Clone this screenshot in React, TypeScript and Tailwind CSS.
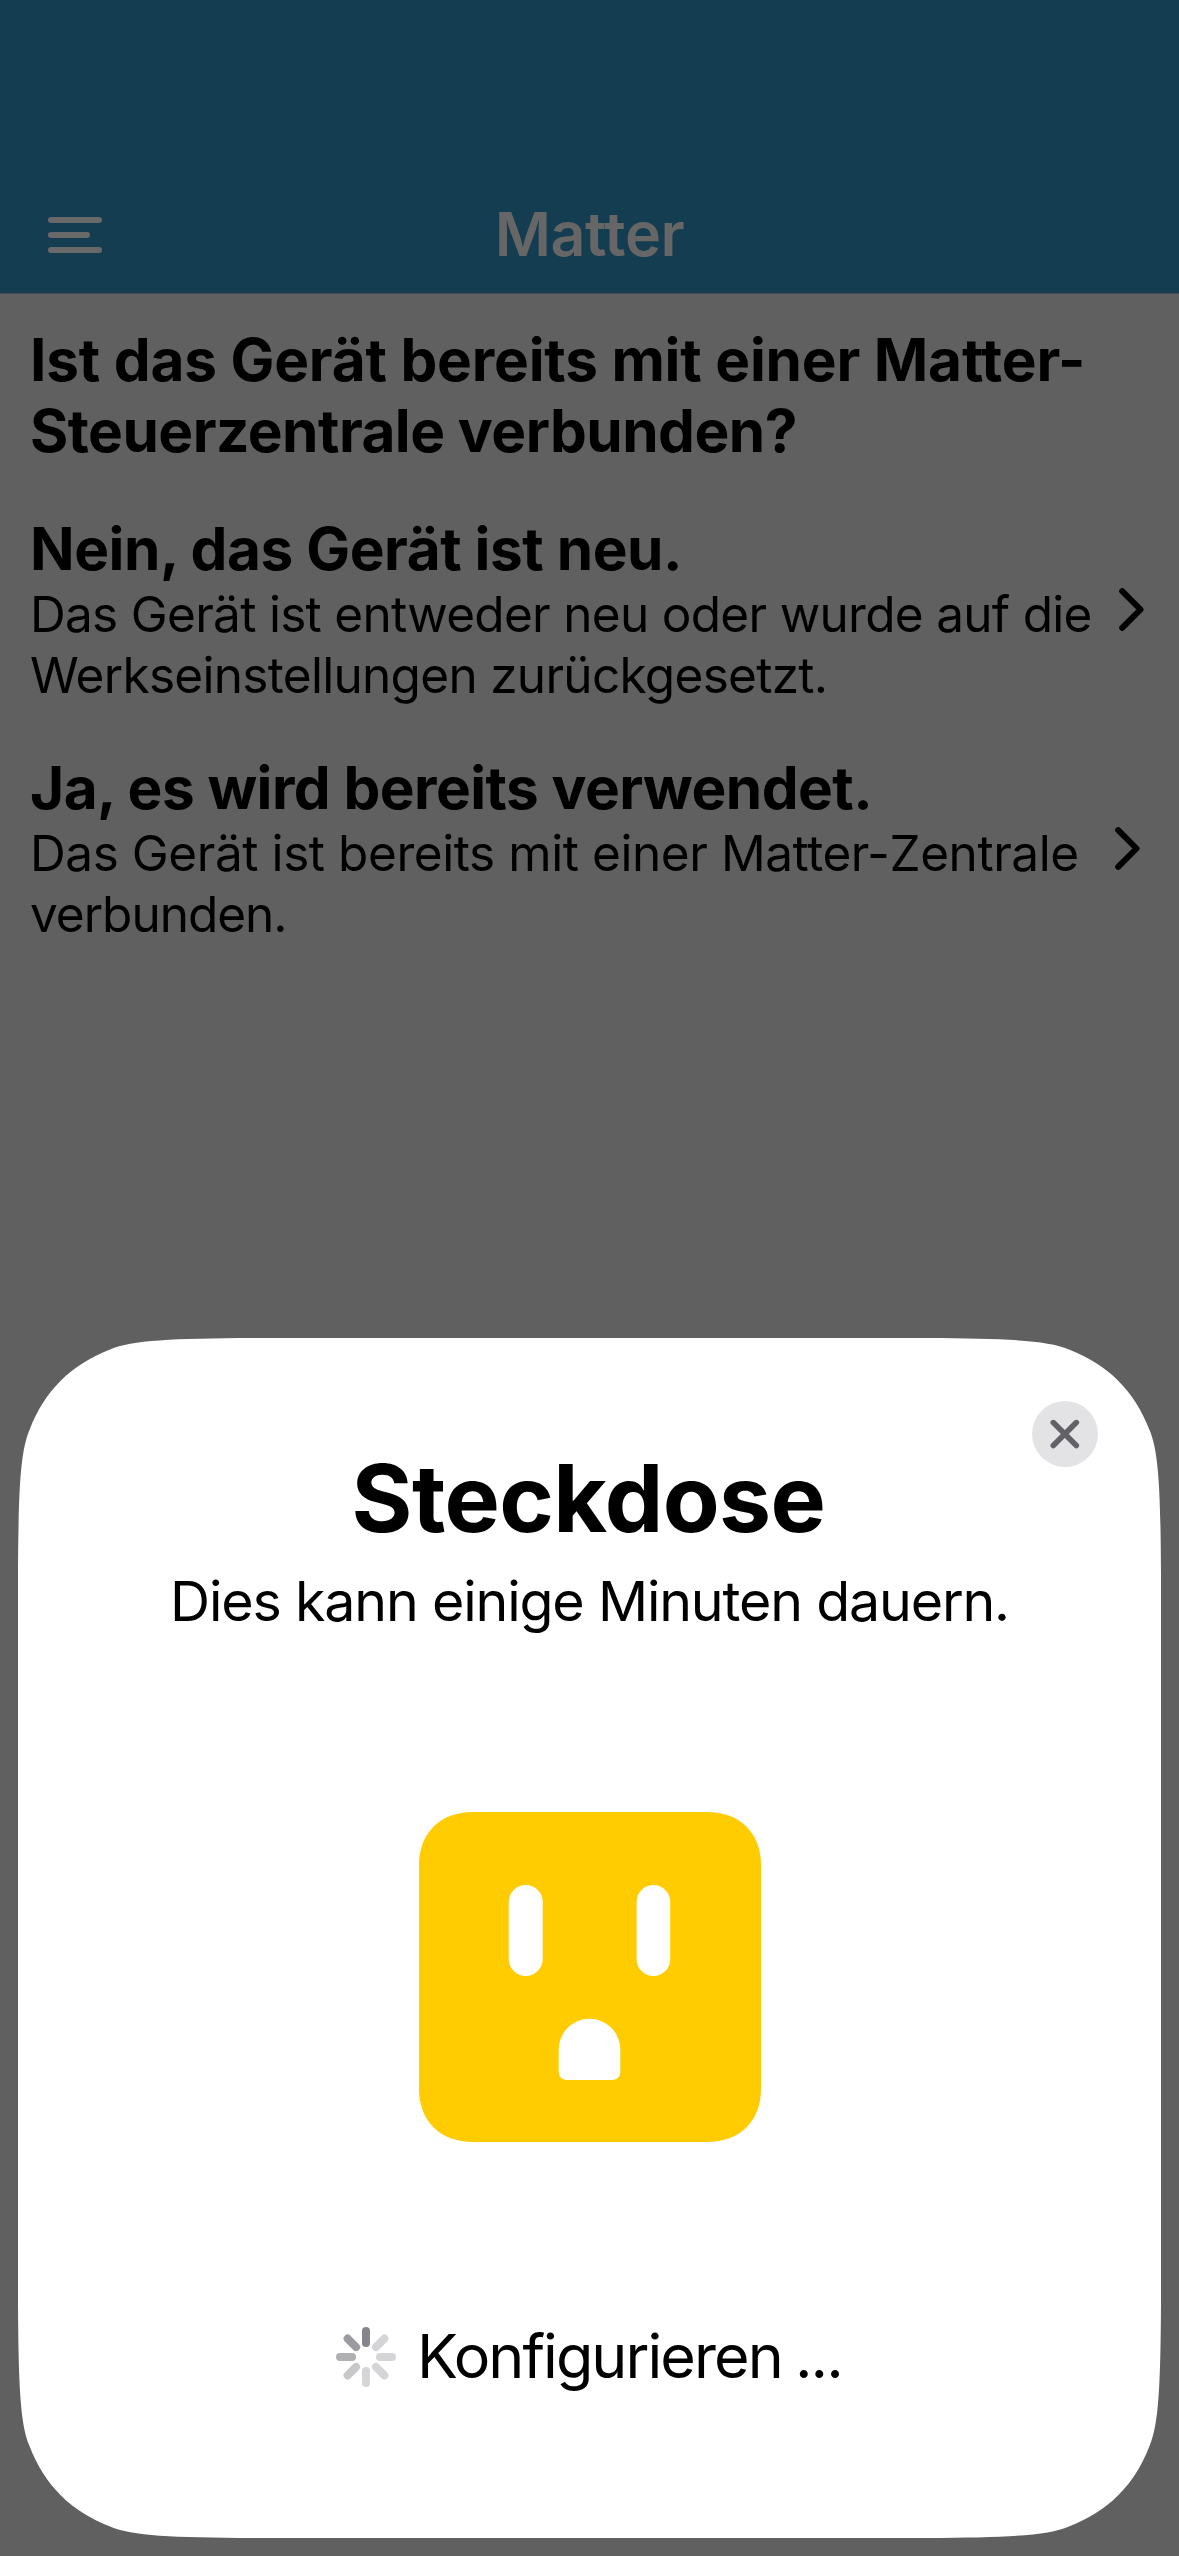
type Line = { text: string; tracking: string };
type Option = { title: Line; lines: Line[]; chevron: string };

const question: Line[] = [
  { text: 'Ist das Gerät bereits mit einer Matter-', tracking: 'tracking-[-0.18px]' },
  { text: 'Steuerzentrale verbunden?', tracking: 'tracking-[-0.52px]' },
];

const options: Option[] = [
  {
    title: { text: 'Nein, das Gerät ist neu.', tracking: 'tracking-[-0.45px]' },
    lines: [
      { text: 'Das Gerät ist entweder neu oder wurde auf die', tracking: 'tracking-[-0.7px]' },
      { text: 'Werkseinstellungen zurückgesetzt.', tracking: 'tracking-[-0.7px]' },
    ],
    chevron: 'mr-[35px]',
  },
  {
    title: { text: 'Ja, es wird bereits verwendet.', tracking: 'tracking-[-0.54px]' },
    lines: [
      { text: 'Das Gerät ist bereits mit einer Matter-Zentrale', tracking: 'tracking-[-0.43px]' },
      { text: 'verbunden.', tracking: 'tracking-[-1px]' },
    ],
    chevron: 'mr-[39px]',
  },
];

const spokes = [
  { angle: 0, color: '#86858b' },
  { angle: 45, color: '#d5d5d7' },
  { angle: 90, color: '#d5d5d7' },
  { angle: 135, color: '#d5d5d7' },
  { angle: 180, color: '#d5d5d7' },
  { angle: 225, color: '#c8c8ca' },
  { angle: 270, color: '#b0b0b2' },
  { angle: 315, color: '#9c9ba1' },
];

function TextLine({ line }: { line: Line }) {
  return <span className={`block whitespace-nowrap ${line.tracking}`}>{line.text}</span>;
}

function MenuIcon() {
  return (
    <svg width="54" height="36" viewBox="0 0 54 36" fill="#696969">
      <rect width="54" height="6" rx="3" />
      <rect y="15" width="42" height="6" rx="3" />
      <rect y="30" width="54" height="6" rx="3" />
    </svg>
  );
}

function Chevron() {
  return (
    <svg width="25" height="43" viewBox="0 0 25 43" fill="none" stroke="#000" strokeWidth="6" strokeLinecap="round" strokeLinejoin="round">
      <path d="M3.2 3.2 21.5 21.5 3.2 39.8" />
    </svg>
  );
}

function SocketIcon() {
  return (
    <svg width="342" height="330" viewBox="0 0 342 330">
      <path
        fill="#ffcc02"
        d="M54 0H288C321 0 342 21 342 53V277C342 309 321 330 288 330H54C21 330 0 309 0 277V53C0 21 21 0 54 0Z"
      />
      <rect x="89.7" y="73" width="34" height="91" rx="17" fill="#fff" />
      <rect x="217.6" y="73" width="33.6" height="91" rx="16.8" fill="#fff" />
      <path
        fill="#fff"
        d="M170.5 206.7C187.5 206.7 201.3 220.5 201.3 237.5V260C201.3 264.4 197.7 268 193.3 268H147.7C143.3 268 139.7 264.4 139.7 260V237.5C139.7 220.5 153.5 206.7 170.5 206.7Z"
      />
    </svg>
  );
}

function Spinner() {
  return (
    <svg className="mt-0.5" width="60" height="60" viewBox="-30 -30 60 60">
      {spokes.map((s) => (
        <rect key={s.angle} x="-4" y="-30" width="8" height="20" rx="4" fill={s.color} transform={`rotate(${s.angle})`} />
      ))}
    </svg>
  );
}

export default function App() {
  return (
    <div className="relative flex h-[2556px] w-[1179px] flex-col overflow-hidden bg-[#606060] font-['Inter',sans-serif] text-black">
      <header className="grid h-[294px] shrink-0 grid-cols-3 items-center border-b border-[#4b4e50] bg-[#153d51] pt-[175px]">
        <button className="justify-self-start pt-0.5 pl-12" aria-label="Menü">
          <MenuIcon />
        </button>
        <h1 className="text-center text-[61px] leading-[74px] font-semibold tracking-[-0.4px] text-[#666]">Matter</h1>
      </header>

      <main className="flex flex-col pt-[30px] pl-[30px]">
        <h2 className="text-[58.5px] leading-[71px] font-bold">
          {question.map((l) => (
            <TextLine key={l.text} line={l} />
          ))}
        </h2>
        {options.map((o) => (
          <section key={o.title.text} className="mt-[47px] flex h-[192px] items-center justify-between">
            <div className="flex w-[1070px] flex-col">
              <h3 className="text-[58.5px] leading-[71px] font-bold">
                <TextLine line={o.title} />
              </h3>
              <p className="text-[49.5px] leading-[60.5px]">
                {o.lines.map((l) => (
                  <TextLine key={l.text} line={l} />
                ))}
              </p>
            </div>
            <div className={o.chevron}>
              <Chevron />
            </div>
          </section>
        ))}
      </main>

      <div
        role="dialog"
        className="absolute inset-x-[18px] top-[1338px] flex h-[1200px] flex-col items-center bg-white pt-[104px] [clip-path:path('M235_0H908C988_0.5_1029_2_1051_11.5C1090_26.5_1116.5_53_1131.5_92C1141_114_1142.5_155_1143_235V965C1142.5_1045_1141_1086_1131.5_1108C1116.5_1147_1090_1173.5_1051_1188.5C1029_1198_988_1199.5_908_1200H235C155_1199.5_114_1198_92_1188.5C53_1173.5_26.5_1147_11.5_1108C2_1086_0.5_1045_0_965V235C0.5_155_2_114_11.5_92C26.5_53_53_26.5_92_11.5C114_2_155_0.5_235_0Z')]"
      >
        <button
          aria-label="Schließen"
          className="absolute top-[63px] right-[63px] flex size-[66px] items-center justify-center rounded-full bg-[#e3e3e5]"
        >
          <svg width="30" height="30" viewBox="0 0 30 30" stroke="#636168" strokeWidth="5.6" strokeLinecap="round">
            <path d="M3.3 3.6 26.3 26.6M26.3 3.6 3.3 26.6" />
          </svg>
        </button>
        <h2 className="pr-0.5 text-[93px] leading-[112px] font-bold tracking-[-0.6px]">Steckdose</h2>
        <p className="mt-[13px] text-[55.5px] leading-[68px] tracking-[-1.16px]">Dies kann einige Minuten dauern.</p>
        <div className="mt-[177px]">
          <SocketIcon />
        </div>
        <div className="mt-[177px] flex items-center gap-[21px] self-start pl-[318px]">
          <Spinner />
          <p className="text-[61px] leading-[74px] tracking-[-1.93px] whitespace-nowrap [word-spacing:-2px]">Konfigurieren ...</p>
        </div>
      </div>
    </div>
  );
}
